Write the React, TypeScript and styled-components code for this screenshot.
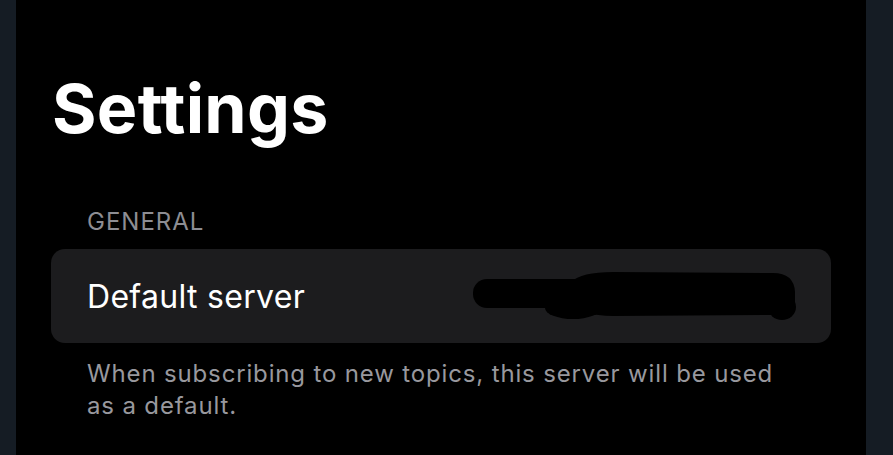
import styled, { createGlobalStyle } from 'styled-components';

const GlobalStyle = createGlobalStyle`
  html, body {
    margin: 0;
    padding: 0;
    background: #000;
  }
  body {
    font-family: Inter, "Liberation Sans", sans-serif;
    -webkit-font-smoothing: antialiased;
  }
`;

function Redacted() {
  return (
    <Scribble viewBox="0 0 326 52" width="326" height="52">
      <rect x="0" y="9" width="120" height="29" rx="14" />
      <ellipse cx="100" cy="38" rx="28" ry="11" />
      <path d="M98 12 Q108 2 140 2 L300 3 Q321 3 322 22 L322 32 Q320 45 300 45 L140 46 Q108 45 98 36 Z" />
      <ellipse cx="309" cy="37" rx="14" ry="13" />
    </Scribble>
  );
}

export default function App() {
  return (
    <>
      <GlobalStyle />
      <Frame>
        <Edge $width={16} />
        <Main>
          <Title>Settings</Title>
          <SectionLabel>GENERAL</SectionLabel>
          <Card>
            <RowLabel>Default server</RowLabel>
            <Redacted />
          </Card>
          <Footnote>
            When subscribing to new topics, this server will be used as a default.
          </Footnote>
        </Main>
        <Edge $width={27} />
      </Frame>
    </>
  );
}

const Frame = styled.div`
  display: flex;
  width: 893px;
  height: 455px;
  overflow: hidden;
  background: #000;
`;

const Edge = styled.div<{ $width: number }>`
  flex: 0 0 ${(p) => p.$width}px;
  background: #151c24;
`;

const Main = styled.div`
  flex: 1;
  display: flex;
  flex-direction: column;
  padding: 0 35px;
`;

const Title = styled.h1`
  margin: 74px 0 0 1px;
  font-size: 68px;
  line-height: 68px;
  font-weight: 700;
  color: #fff;
  letter-spacing: 0.3px;
`;

const SectionLabel = styled.div`
  margin: 66px 0 0 36px;
  font-size: 24px;
  line-height: 28px;
  color: #8d8d93;
  letter-spacing: 1px;
`;

const Card = styled.div`
  margin-top: 13px;
  height: 94px;
  display: flex;
  align-items: center;
  justify-content: space-between;
  padding: 0 32px 0 36px;
  border-radius: 14px;
  background: #1c1c1e;
`;

const RowLabel = styled.span`
  font-size: 32px;
  color: #fff;
  letter-spacing: 0.3px;
`;

const Scribble = styled.svg`
  fill: #000;
  display: block;
`;

const Footnote = styled.p`
  margin: 15px 50px 0 36px;
  font-size: 24px;
  line-height: 32px;
  color: #98989e;
  letter-spacing: 0.85px;
`;
